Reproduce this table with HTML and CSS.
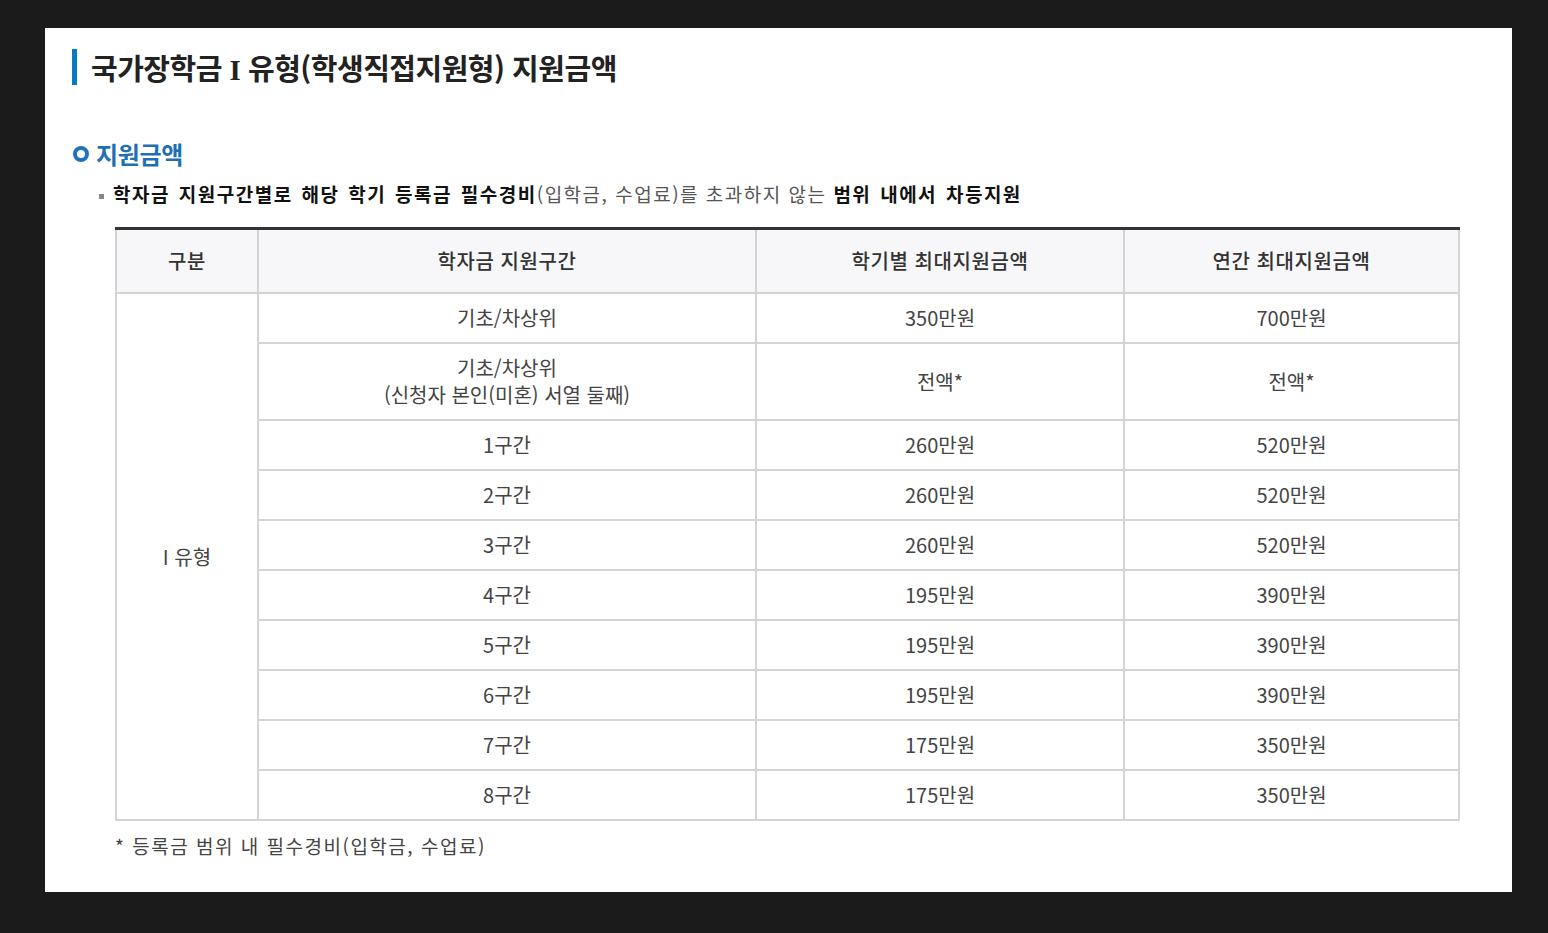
FILE: index.html
```html
<!DOCTYPE html>
<html lang="ko">
<head>
<meta charset="utf-8">
<title>국가장학금 I 유형 지원금액</title>
<link rel="stylesheet" href="styles.css">
</head>
<body>
<div class="panel">
  <h2 class="page-title">국가장학금 <span class="roman">I</span> 유형(학생직접지원형) 지원금액</h2>

  <h3 class="sub-title"><span class="ring"></span>지원금액</h3>
  <p class="bullet"><span class="sq"></span><b>학자금 지원구간별로 해당 학기 등록금 필수경비</b>(입학금, 수업료)를 초과하지 않는 <b>범위 내에서 차등지원</b></p>

  <table class="grid">
    <colgroup>
      <col class="c1"><col class="c2"><col class="c3"><col class="c4">
    </colgroup>
    <thead>
      <tr><th>구분</th><th>학자금 지원구간</th><th>학기별 최대지원금액</th><th>연간 최대지원금액</th></tr>
    </thead>
    <tbody>
      <tr><td rowspan="10" class="type">I 유형</td><td>기초/차상위</td><td>350만원</td><td>700만원</td></tr>
      <tr class="tall"><td>기초/차상위<br>(신청자 본인(미혼) 서열 둘째)</td><td>전액*</td><td>전액*</td></tr>
      <tr><td>1구간</td><td>260만원</td><td>520만원</td></tr>
      <tr><td>2구간</td><td>260만원</td><td>520만원</td></tr>
      <tr><td>3구간</td><td>260만원</td><td>520만원</td></tr>
      <tr><td>4구간</td><td>195만원</td><td>390만원</td></tr>
      <tr><td>5구간</td><td>195만원</td><td>390만원</td></tr>
      <tr><td>6구간</td><td>195만원</td><td>390만원</td></tr>
      <tr><td>7구간</td><td>175만원</td><td>350만원</td></tr>
      <tr><td>8구간</td><td>175만원</td><td>350만원</td></tr>
    </tbody>
  </table>
  <p class="note">* 등록금 범위 내 필수경비(입학금, 수업료)</p>
</div>
</body>
</html>
```
FILE: styles.css
```css
html, body {
  margin: 0;
  padding: 0;
}
body {
  background: #1b1b1b;
  padding: 28px 36px 0 45px;
  height: 933px;
  box-sizing: border-box;
  font-family: "Noto Sans CJK KR", "Noto Sans", sans-serif;
}
.panel {
  background: #fff;
  width: 1467px;
  height: 864px;
  box-sizing: border-box;
  padding: 21px 0 0 27px;
}
.page-title {
  margin: 0;
  height: 36px;
  border-left: 5px solid #0b78c4;
  padding-left: 14px;
  font-size: 29px;
  font-weight: 700;
  color: #222;
  line-height: 36px;
  letter-spacing: -0.5px;
}
.roman {
  font-family: "Liberation Serif", serif;
  font-weight: 700;
}
.sub-title {
  margin: 51px 0 0 0;
  display: flex;
  align-items: center;
  height: 34px;
  font-size: 24px;
  font-weight: 700;
  color: #1f6fb5;
  letter-spacing: -0.3px;
}
.ring {
  width: 16px;
  height: 16px;
  border: 4px solid #1f73b8;
  border-radius: 50%;
  box-sizing: border-box;
  margin: 1px 7px 0 1px;
}
.bullet {
  margin: 8px 0 0 27px;
  display: flex;
  align-items: center;
  height: 30px;
  font-size: 19px;
  letter-spacing: 1.5px;
  color: #555;
  white-space: pre;
}
.bullet b {
  color: #111;
  font-weight: 700;
  word-spacing: 2px;
}
.sq {
  width: 5px;
  height: 5px;
  background: #888;
  margin: 6px 9px 0 0;
}
.grid {
  margin: 19px 0 0 43px;
  width: 1343px;
  border-collapse: collapse;
  border-top: 3px solid #333;
  table-layout: fixed;
  font-size: 20px;
  color: #444;
}
.c1 { width: 142px; }
.c2 { width: 498px; }
.c3 { width: 368px; }
.c4 { width: 335px; }
.grid th, .grid td {
  border: 2px solid #d4d4d4;
  text-align: center;
  padding: 0;
}
.grid thead tr { height: 64px; }
.grid th {
  border-top: 0;
  background: #f7f7f9;
  color: #333;
  font-weight: 500;
  letter-spacing: 0.6px;
}
.grid tbody tr { height: 50px; }
.grid tbody tr.tall { height: 77px; }
.grid tbody td { line-height: 27px; }
.note {
  margin: 11px 0 0 43px;
  font-size: 19px;
  letter-spacing: 1.5px;
  color: #444;
  line-height: 28px;
}
```
